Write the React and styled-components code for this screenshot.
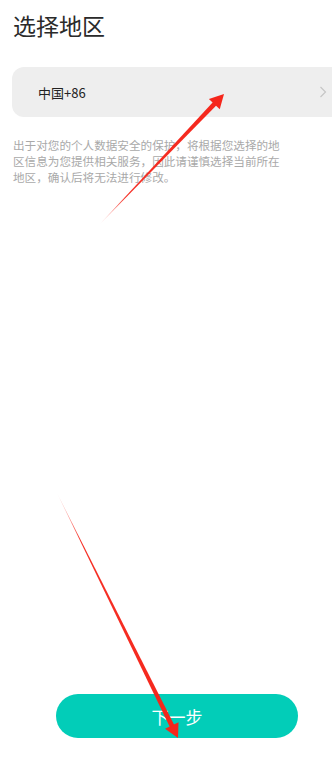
import React from "react";
import styled, { createGlobalStyle } from "styled-components";

const Global = createGlobalStyle`
  html, body { margin: 0; padding: 0; background: #ffffff; }
  body { font-family: "Noto Sans CJK SC", "Noto Sans", sans-serif; overflow: hidden; }
`;

const Page = styled.div`
  position: relative;
  height: 760px;
  display: flex;
  flex-direction: column;
  overflow: hidden;
`;

const Title = styled.h1`
  margin: 0;
  padding: 14px 13px 0;
  font-size: 23px;
  line-height: 23px;
  font-weight: 400;
  color: #2a2a2a;
`;

const RegionRow = styled.div`
  margin: 30px -12px 0 12px;
  height: 50px;
  border-radius: 12px;
  background: #eeeeee;
  display: flex;
  align-items: center;
  justify-content: space-between;
  padding: 0 17px 0 26px;
`;

const RegionText = styled.span`
  font-size: 13px;
  color: #222222;
`;

const Notice = styled.p`
  margin: 20px 0 0 13px;
  width: 272px;
  font-size: 11.6px;
  line-height: 16px;
  color: #a9a9a9;
`;

const NextButton = styled.button`
  margin: auto 0 22px 56px;
  width: 242px;
  height: 44px;
  border: none;
  border-radius: 22px;
  background: #02cdb8;
  color: #ffffff;
  font-family: inherit;
  font-size: 17px;
  display: flex;
  align-items: center;
  justify-content: center;
`;

const Overlay = styled.svg`
  position: absolute;
  left: 0;
  top: 0;
  pointer-events: none;
`;

const Chevron = () => (
  <svg width="8" height="12" viewBox="0 0 8 12">
    <path d="M1.5 1 L6.5 6 L1.5 11" fill="none" stroke="#c6c6c6" strokeWidth="1.2" />
  </svg>
);

const Arrow = ({ x1, y1, x2, y2, id }) => {
  const dx = x2 - x1;
  const dy = y2 - y1;
  const L = Math.sqrt(dx * dx + dy * dy);
  const ang = (Math.atan2(dy, dx) * 180) / Math.PI;
  const hl = 14;
  const hw = 7.5;
  const sw = 2.4;
  return (
    <g transform={`translate(${x1} ${y1}) rotate(${ang})`}>
      <defs>
        <linearGradient id={id} gradientUnits="userSpaceOnUse" x1="0" y1="0" x2={L} y2="0">
          <stop offset="0" stopColor="#f5261b" stopOpacity="0.15" />
          <stop offset="0.2" stopColor="#f5261b" stopOpacity="0.95" />
          <stop offset="1" stopColor="#f5261b" stopOpacity="1" />
        </linearGradient>
      </defs>
      <polygon
        points={`0,0 ${L - hl + 1},${-sw} ${L - hl + 1},${sw}`}
        fill={`url(#${id})`}
      />
      <polygon points={`${L - hl},${-hw} ${L},0 ${L - hl},${hw}`} fill="#f5261b" />
    </g>
  );
};

export default function App() {
  return (
    <>
      <Global />
      <Page>
        <Title>选择地区</Title>
        <RegionRow>
          <RegionText>中国+86</RegionText>
          <Chevron />
        </RegionRow>
        <Notice>
          出于对您的个人数据安全的保护，将根据您选择的地区信息为您提供相关服务，因此请谨慎选择当前所在地区，确认后将无法进行修改。
        </Notice>
        <NextButton>下一步</NextButton>
        <Overlay width="332" height="760" viewBox="0 0 332 760">
          <Arrow id="a1" x1={100} y1={224} x2={224} y2={94} />
          <Arrow id="a2" x1={57} y1={493} x2={178} y2={738} />
        </Overlay>
      </Page>
    </>
  );
}
